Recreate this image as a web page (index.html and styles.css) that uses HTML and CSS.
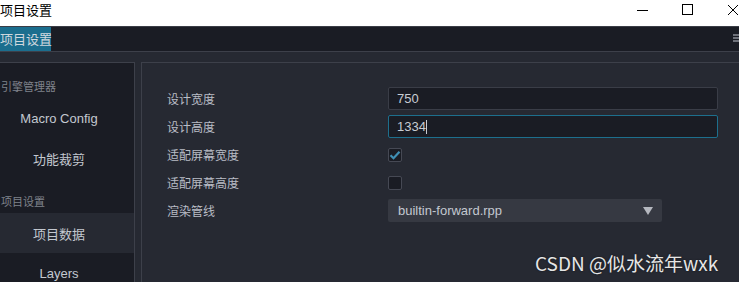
FILE: index.html
```html
<!DOCTYPE html>
<html lang="zh">
<head>
<meta charset="utf-8">
<link rel="stylesheet" href="styles.css">
</head>
<body>
<div class="window">
  <div class="titlebar">
    <span class="title">项目设置</span>
    <svg class="controls" width="110" height="26" viewBox="0 0 110 26">
      <path d="M8 10.5h11" stroke="#000" stroke-width="1"/>
      <rect x="53.5" y="4.5" width="10" height="10" fill="none" stroke="#000" stroke-width="1"/>
      <path d="M99 5l10 10M109 5l-10 10" stroke="#000" stroke-width="1"/>
    </svg>
  </div>
  <div class="tabbar">
    <div class="tab">项目设置</div>
    <svg class="menu" width="6" height="8" viewBox="0 0 6 8"><path d="M0 1h6M0 4h6M0 7h6" stroke="#8a8d96" stroke-width="1.4"/></svg>
  </div>
  <div class="main">
    <div class="side">
      <div class="side-head">引擎管理器</div>
      <div class="side-item">Macro Config</div>
      <div class="side-item">功能裁剪</div>
      <div class="side-head">项目设置</div>
      <div class="side-item active">项目数据</div>
      <div class="side-item">Layers</div>
    </div>
    <div class="content">
      <div class="row"><div class="label">设计宽度</div><div class="input">750</div></div>
      <div class="row"><div class="label">设计高度</div><div class="input focus">1334<span class="caret"></span></div></div>
      <div class="row"><div class="label">适配屏幕宽度</div><div class="check on"><svg width="12" height="12" viewBox="0 0 12 12"><path d="M1.5 6.2l3 3 6-6.5" fill="none" stroke="#3f8fb5" stroke-width="2.2"/></svg></div></div>
      <div class="row"><div class="label">适配屏幕高度</div><div class="check"></div></div>
      <div class="row"><div class="label">渲染管线</div><div class="select"><span>builtin-forward.rpp</span><svg class="arrow" width="10" height="8" viewBox="0 0 10 8"><path d="M0 0h10L5 8z" fill="#b5b8bf"/></svg></div></div>
    </div>
  </div>
  <div class="watermark">CSDN @似水流年wxk</div>
</div>
</body>
</html>
```
FILE: styles.css
```css
html, body {
  margin: 0;
  padding: 0;
  width: 739px;
  height: 282px;
  overflow: hidden;
  background: #262932;
  font-family: "Noto Sans CJK SC", "Noto Sans", sans-serif;
}
.window {
  position: relative;
  width: 739px;
  height: 282px;
  display: flex;
  flex-direction: column;
}
.titlebar {
  height: 26px;
  flex: none;
  background: #fff;
  display: flex;
  align-items: center;
  justify-content: space-between;
}
.title {
  font-size: 13px;
  color: #000;
  margin-top: -7px;
}
.controls { display: block; }
.tabbar {
  height: 24px;
  flex: none;
  background: #1a1c24;
  border-top: 1px solid #3a3d46;
  border-bottom: 1px solid #3d404a;
  display: flex;
  align-items: stretch;
  justify-content: space-between;
}
.tab {
  background: #1b6e8e;
  color: #d0d8de;
  font-size: 13px;
  line-height: 24px;
  width: 51px;
  box-sizing: border-box;
  white-space: nowrap;
}
.menu {
  margin-top: 7px;
}
.main {
  flex: 1;
  display: flex;
  gap: 6px;
  padding-top: 10px;
  min-height: 0;
}
.side {
  width: 135px;
  flex: none;
  box-sizing: border-box;
  background: #1a1c24;
  border-top: 1px solid #3d404a;
  border-right: 1px solid #3d404a;
  display: flex;
  flex-direction: column;
  overflow: hidden;
}
.side-head {
  height: 35px;
  flex: none;
  box-sizing: border-box;
  padding-top: 16px;
  padding-left: 1px;
  font-size: 11px;
  line-height: 14px;
  color: #7f828b;
  white-space: nowrap;
}
.side-item {
  height: 40px;
  flex: none;
  display: flex;
  align-items: center;
  justify-content: center;
  padding-right: 16px;
  font-size: 13px;
  color: #c3c8d0;
  font-family: "Liberation Sans", "Noto Sans CJK SC", sans-serif;
}
.side-item.active { background: #262932; }
.content {
  flex: 1;
  background: #262932;
  border-top: 1px solid #3d404a;
  border-left: 1px solid #3d404a;
  padding: 24px 21px 0 25px;
  display: flex;
  flex-direction: column;
  gap: 5px;
}
.row {
  height: 23px;
  flex: none;
  display: flex;
  align-items: center;
}
.label {
  width: 221px;
  flex: none;
  font-size: 12px;
  color: #b9bdc6;
}
.input {
  flex: 1;
  height: 23px;
  box-sizing: border-box;
  background: #1a1c24;
  border: 1px solid #3a3d47;
  border-radius: 2px;
  color: #c8ccd3;
  font-family: "Liberation Sans", sans-serif;
  font-size: 13px;
  line-height: 21px;
  padding-left: 8px;
  display: flex;
  align-items: center;
}
.input.focus { border-color: #1d6f8d; }
.caret {
  display: inline-block;
  width: 1px;
  height: 14px;
  background: #c8ccd3;
}
.check {
  width: 14px;
  height: 14px;
  box-sizing: border-box;
  border: 1px solid #464954;
  border-radius: 2px;
  background: #1a1c24;
  display: flex;
  align-items: center;
  justify-content: center;
}
.select {
  width: 274px;
  height: 23px;
  box-sizing: border-box;
  background: #363942;
  border-radius: 2px;
  display: flex;
  align-items: center;
  justify-content: space-between;
  padding: 0 9px 0 10px;
  font-family: "Liberation Sans", sans-serif;
  font-size: 13px;
  color: #c3c8d0;
}
.arrow { display: block; }
.watermark {
  position: absolute;
  left: 535px;
  top: 249px;
  font-size: 19px;
  color: #e6e6e6;
  text-shadow: 0 0 2px rgba(0,0,0,0.6);
  white-space: nowrap;
  font-family: "Noto Sans CJK SC", "Noto Sans", sans-serif;
}
```
